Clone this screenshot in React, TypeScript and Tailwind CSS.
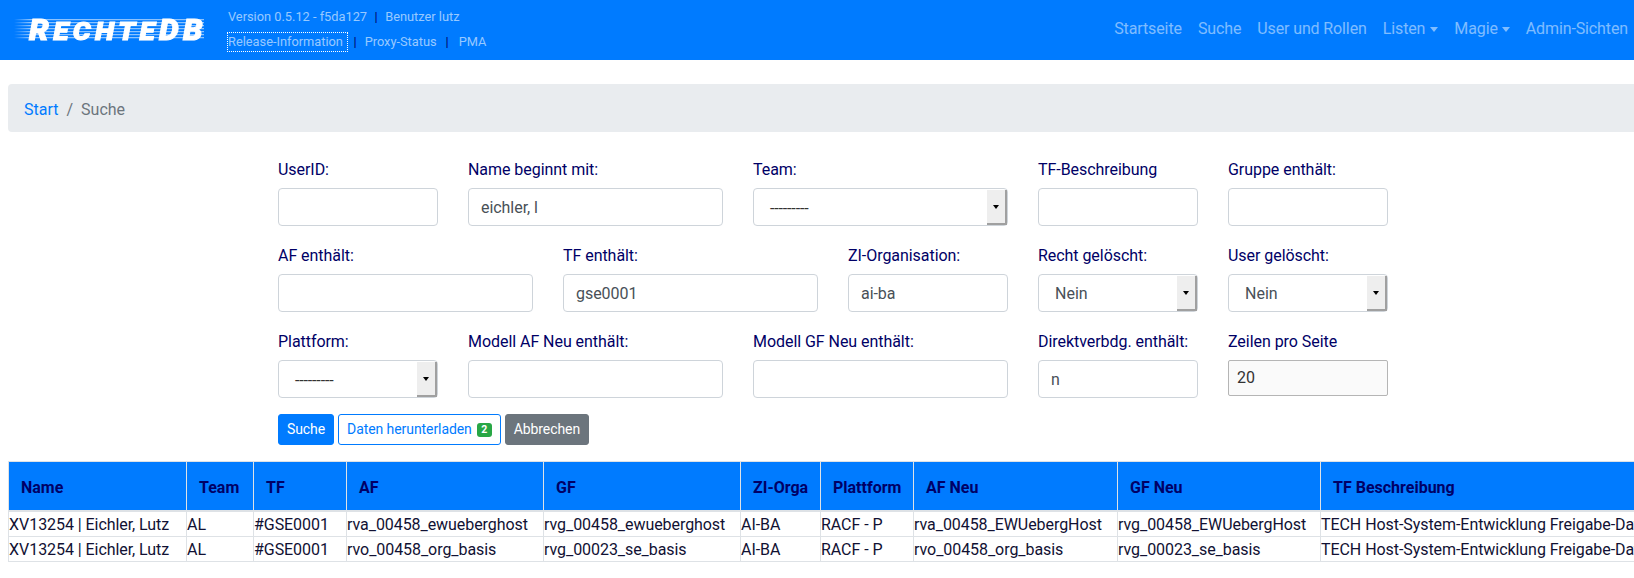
import React from "react";

const roboto = { fontFamily: "Roboto, sans-serif" };

function Label({ children }: { children: React.ReactNode }) {
  return <label className="block h-6 mb-2 text-base leading-[27px] tracking-[-0.05px] text-[#000066]">{children}</label>;
}

function Input({ label, value, span }: { label: string; value?: string; span: string }) {
  return (
    <div className={`${span} mb-4`}>
      <Label>{label}</Label>
      <div className="h-[38px] rounded border border-[#ced4da] bg-white px-[12px] text-base leading-[38px] tracking-[-0.05px] text-[#495057]">
        {value}
      </div>
    </div>
  );
}

function Select({ label, value, span, dashed }: { label: string; value: string; span: string; dashed?: boolean }) {
  return (
    <div className={`${span} mb-4`}>
      <Label>{label}</Label>
      <div className="flex h-[38px] rounded border border-[#ced4da] bg-white">
        <div className={`flex-1 pl-4 text-base ${dashed ? "leading-[40px] tracking-[-0.15px] text-[#333333]" : "leading-[38px] text-[#495057]"}`}>{value}</div>
        <div className="flex w-[20px] items-center justify-center bg-[#eeeeee] border-r-2 border-b-2 border-[#a0a0a0] mt-px">
          <span className="block w-0 h-0 border-x-[3px] border-t-[4px] border-x-transparent border-t-black" />
        </div>
      </div>
    </div>
  );
}

const columns = [
  ["Name", "w-[178px]"],
  ["Team", "w-[67px]"],
  ["TF", "w-[93px]"],
  ["AF", "w-[197px]"],
  ["GF", "w-[197px]"],
  ["ZI-Orga", "w-[80px]"],
  ["Plattform", "w-[93px]"],
  ["AF Neu", "w-[204px]"],
  ["GF Neu", "w-[203px]"],
  ["TF Beschreibung", "w-[500px]"],
];

const rows = [
  ["XV13254 | Eichler, Lutz", "AL", "#GSE0001", "rva_00458_ewueberghost", "rvg_00458_ewueberghost", "AI-BA", "RACF - P", "rva_00458_EWUebergHost", "rvg_00458_EWUebergHost", "TECH Host-System-Entwicklung Freigabe-Daten"],
  ["XV13254 | Eichler, Lutz", "AL", "#GSE0001", "rvo_00458_org_basis", "rvg_00023_se_basis", "AI-BA", "RACF - P", "rvo_00458_org_basis", "rvg_00023_se_basis", "TECH Host-System-Entwicklung Freigabe-Daten"],
];

function Logo() {
  return (
    <div className="relative w-[192px] h-[24px] mr-[21px] shrink-0">
      <div className="absolute left-0 right-[2px] top-[1px] bottom-[3px] bg-[repeating-linear-gradient(to_bottom,rgba(255,255,255,0.55)_0px,rgba(255,255,255,0.55)_1px,rgba(255,255,255,0.15)_1px,rgba(255,255,255,0.15)_2px,transparent_2px,transparent_3px)] [mask-image:linear-gradient(to_right,transparent,black_16px)]" />
      <div
        className="absolute left-[15px] top-[-4px] origin-left scale-x-[1.08] text-white italic font-black leading-[32px] tracking-[4px] whitespace-nowrap [-webkit-text-stroke:1px_white]"
        style={{ fontFamily: "Roboto, sans-serif" }}
      >
        <span className="text-[29px]">R</span>
        <span className="text-[26px]">ECHTE</span>
        <span className="text-[29px]">DB</span>
      </div>
    </div>
  );
}

function Sep() {
  return <span className="text-[#000066]">|</span>;
}

export default function App() {
  return (
    <div className="h-[578px] w-full overflow-hidden bg-white" style={roboto}>
      <div className="w-[1652px]">
        <nav className="flex h-[60px] items-center bg-[#007bff] pl-[14px] pr-4">
          <Logo />
          <div className="flex flex-col text-[12.8px] leading-[20px] text-white/60">
            <div className="flex h-[20px] items-center pl-px pb-[2px]">
              <span>Version 0.5.12 - f5da127</span>
              <span className="mx-[7.5px]"><Sep /></span>
              <span>Benutzer lutz</span>
            </div>
            <div className="flex h-[21px] mt-[4px] items-center">
              <span className="border border-dotted border-white px-0 h-[20px] leading-[18px] w-[121px]">Release-Information</span>
              <span className="ml-[5.5px] mr-[8px]"><Sep /></span>
              <span>Proxy-Status</span>
              <span className="ml-[9px] mr-[10px]"><Sep /></span>
              <span>PMA</span>
            </div>
          </div>
          <div className="ml-auto flex h-[58px] items-center self-start text-base tracking-[-0.12px] text-white/50">
            <a className="px-2">Startseite</a>
            <a className="px-2">Suche</a>
            <a className="px-2">User und Rollen</a>
            <a className="flex items-center px-2">Listen<span className="ml-[5px] w-0 h-0 border-x-4 border-t-[5px] border-x-transparent border-t-white/50" /></a>
            <a className="flex items-center px-2">Magie<span className="ml-[4px] w-0 h-0 border-x-4 border-t-[5px] border-x-transparent border-t-white/50" /></a>
            <a className="px-2">Admin-Sichten</a>
          </div>
        </nav>

        <div className="mx-2 mt-6 mb-6 flex h-12 items-center rounded bg-[#e9ecef] px-4 pt-1 text-base">
          <a className="text-[#007bff]">Start</a>
          <span className="px-2 text-[#6c757d]">/</span>
          <span className="text-[#6c757d]">Suche</span>
        </div>

        <div className="ml-[278px] w-[1110px]">
          <div className="grid grid-cols-12 gap-x-[30px]">
            <Input span="col-span-2" label="UserID:" />
            <Input span="col-span-3" label="Name beginnt mit:" value="eichler, l" />
            <Select span="col-span-3" label="Team:" value="---------" dashed />
            <Input span="col-span-2" label="TF-Beschreibung" />
            <Input span="col-span-2" label="Gruppe enthält:" />

            <Input span="col-span-3" label="AF enthält:" />
            <Input span="col-span-3" label="TF enthält:" value="gse0001" />
            <Input span="col-span-2" label="ZI-Organisation:" value="ai-ba" />
            <Select span="col-span-2" label="Recht gelöscht:" value="Nein" />
            <Select span="col-span-2" label="User gelöscht:" value="Nein" />

            <Select span="col-span-2" label="Plattform:" value="---------" dashed />
            <Input span="col-span-3" label="Modell AF Neu enthält:" />
            <Input span="col-span-3" label="Modell GF Neu enthält:" />
            <Input span="col-span-2" label="Direktverbdg. enthält:" value="n" />
            <div className="col-span-2 mb-4">
              <Label>Zeilen pro Seite</Label>
              <div className="h-[36px] rounded-[2px] border border-[#b5b5b5] bg-[#fafafa] px-2 text-base leading-[34px] text-[#333333]">20</div>
            </div>
          </div>
          <div className="flex gap-1 text-sm leading-[21px] tracking-[-0.08px]">
            <button className="h-[31px] rounded-[3px] border border-[#007bff] bg-[#007bff] px-2 text-white">Suche</button>
            <button className="flex h-[31px] items-center rounded-[3px] border border-[#007bff] bg-white px-2 text-[#007bff]">
              Daten herunterladen
              <span className="ml-[5px] rounded-[3px] bg-[#28a745] px-[4.5px] text-[10.5px] font-bold leading-[14px] text-white">2</span>
            </button>
            <button className="h-[31px] rounded-[3px] border border-[#6c757d] bg-[#6c757d] px-2 text-white">Abbrechen</button>
          </div>
        </div>

        <table className="ml-2 mt-4 w-[1812px] table-fixed border-collapse text-base text-[#111133]">
          <thead>
            <tr className="h-[49px] bg-[#007bff]">
              {columns.map(([name, w]) => (
                <th key={name} className={`${w} whitespace-nowrap border border-b-2 border-[#dee2e6] px-3 pt-1 text-left font-bold text-[#000066]`}>
                  {name}
                </th>
              ))}
            </tr>
          </thead>
          <tbody>
            {rows.map((r, i) => (
              <tr key={i} className="h-[25px]">
                {r.map((c, j) => (
                  <td key={j} className="border border-[#dee2e6] p-0">
                    <div className="h-6 overflow-hidden whitespace-nowrap leading-[26px] tracking-[-0.06px]">{c}</div>
                  </td>
                ))}
              </tr>
            ))}
          </tbody>
        </table>
      </div>
    </div>
  );
}
